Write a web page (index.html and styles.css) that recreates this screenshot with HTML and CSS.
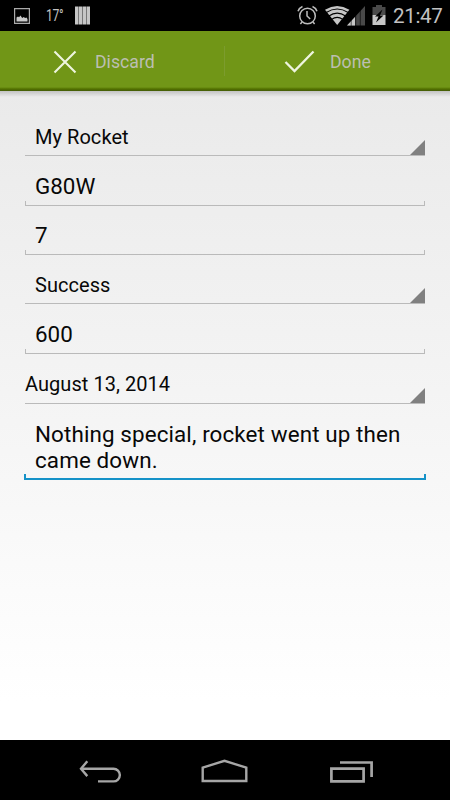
FILE: index.html
```
<!DOCTYPE html>
<html lang="en">
<head>
<meta charset="utf-8">
<title>Flight log</title>
<link rel="stylesheet" href="styles.css">
</head>
<body>
<div class="screen">
  <header class="status">
    <svg class="photo" width="16" height="16" viewBox="0 0 16 16"><path d="M.6.6h14.8v14.8H.6z" fill="none" stroke="#aaa" stroke-width="1.2"/><path d="M2.500 13.500v-4l1.500-1 1 .7 1.500-1.700 1.700 2.500 1.500-1 1.400 1 1.400-.5 1 1.500v2.500z" fill="#c8c8c8"/></svg>
    <span class="temp">17°</span>
    <svg class="bars" width="15" height="19" viewBox="0 0 15 19"><path d="M0 .5h3v18H0zM4 .5h3v18H4zM8 .5h3v18H8zM12 .5h3v18h-3z" fill="#c6c6c6"/><path d="M3 .5h1v18H3zM7 .5h1v18H7zM11 .5h1v18h-1z" fill="#777"/></svg>
    <span class="spacer"></span>
    <svg class="alarm" width="21" height="20" viewBox="0 0 21 20"><g fill="none" stroke="#bcbcbc" stroke-width="1.500"><circle cx="10.500" cy="11" r="7.800"/><path d="M10 6v5l3.200 3"/><path d="M1 6.200Q2 3 5.500 1.500M15.500 1.500Q19 3 20 6.200M5 17l-1.600 2M16 17l1.600 2"/></g></svg>
    <svg class="signal" width="41" height="21" viewBox="0 0 41 21"><path d="M0 4.700Q12.200-2.600 24.400 4.700L12.200 20z" fill="#c6c6c6"/><path d="M1.200 7.500Q12.200.5 23.200 7.500M3.800 11Q12.200 5.200 20.600 11M6.600 14.400Q12.200 10.300 17.800 14.400" fill="none" stroke="#000" stroke-width="1.100"/><path d="M22 20.500L40 1v19.500z" fill="#484848"/><path d="M22 20.500l8-8.600v8.600z" fill="#c6c6c6"/><path d="M26.200 15v6M30.700 10v11M35.300 5v16" stroke="#000" stroke-width=".6"/></svg>
    <svg class="battery" width="14" height="20" viewBox="0 0 14 20"><path d="M4 0h6v2h3.500v8H.5V2H4z" fill="#4a4a4a"/><path d="M.5 10h13v10H.5z" fill="#c6c6c6"/><path d="M10.500 4.500L3 11.500h3.500L4 17.500l7.500-7H8z" fill="#000"/></svg>
    <span class="clock">21:47</span>
  </header>
  <nav class="actions">
    <div class="action discard"><svg width="24" height="24" viewBox="0 0 24 24"><path d="M1.500 1.500l21 21M22.500 1.500l-21 21" fill="none" stroke="#eef5df" stroke-width="2.100"/></svg><span>Discard</span></div>
    <div class="action done"><svg width="31" height="24" viewBox="0 0 31 24"><path d="M1.500 12l9 9L29.500 1.500" fill="none" stroke="#eef5df" stroke-width="2.300"/></svg><span>Done</span></div>
  </nav>
  <main class="form">
    <div class="field spinner h49"><span>My Rocket</span></div>
    <div class="field edit h50"><span>G80W</span></div>
    <div class="field edit h49 short"><span>7</span></div>
    <div class="field spinner h49"><span>Success</span></div>
    <div class="field edit h50"><span>600</span></div>
    <div class="field spinner date h50"><span>August 13, 2014</span></div>
    <div class="field edit notes"><span>Nothing special, rocket went up then<br>came down.</span></div>
  </main>
  <footer class="navbar">
    <svg width="43" height="25" viewBox="0 0 43 25"><g fill="none" stroke="#a6a6a6" stroke-width="2.400"><path d="M2 8.700h32.500a6.350 6.350 0 0 1 0 12.700H19"/><path d="M8.300 1.300L2 8.700l6.300 7.400"/></g></svg>
    <svg width="47" height="25" viewBox="0 0 47 25"><path d="M1.700 8.700L23.500 1.800l21.800 6.900v13.300H1.700z" fill="none" stroke="#a6a6a6" stroke-width="2.400"/></svg>
    <svg width="43" height="22" viewBox="0 0 43 22"><path d="M10 1.500h31.600V16M1.400 7.700h32.200v12.600H1.400z" fill="none" stroke="#a6a6a6" stroke-width="2.700"/></svg>
  </footer>
</div>
</body>
</html>
```

FILE: styles.css
```
body {
  margin: 0;
  font-family: Roboto, sans-serif;
}

.screen {
  width: 450px;
  height: 800px;
  display: flex;
  flex-direction: column;
  overflow: hidden;
  background: #000;
}

svg { display: block; flex: none; }

.status {
  height: 31px;
  flex: none;
  display: flex;
  color: #c2c2c2;
  white-space: nowrap;
}
.photo { margin: 8px 0 0 14px; }
.temp {
  margin: 5px 0 0 16px;
  width: 18px;
  font-size: 16px;
  line-height: 22px;
  letter-spacing: -0.5px;
  transform: scaleX(.76);
  transform-origin: 0 0;
}
.bars { margin: 6px 0 0 11px; }
.spacer { flex: 1; }
.alarm { margin-top: 5px; }
.signal { margin: 5px 0 0 7px; }
.battery { margin: 5px 0 0 6px; }
.clock { width: 64px; padding-left: 7px; box-sizing: border-box; font-size: 20.6px; line-height: 32px; letter-spacing: -0.35px; }

.actions {
  height: 60px;
  flex: none;
  display: flex;
  background: linear-gradient(#719617 56px, #527000 58px, #445b08 60px);
  color: #bcbfb2;
  font-size: 17.700px;
}
.action {
  width: 225px;
  box-sizing: border-box;
  display: flex;
  align-items: center;
  padding-top: 1px;
}
.discard {
  padding-left: 53px;
  gap: 18px;
  background: linear-gradient(#7c9c2e, #7c9c2e) right 15px / 1px 30px no-repeat;
}
.done { padding-left: 59px; gap: 15px; }
.action span { line-height: 24px; }

.form {
  height: 649px;
  flex: none;
  box-sizing: border-box;
  padding: 16px 25px 0;
  background:
    linear-gradient(rgba(0, 0, 0, .17), rgba(0, 0, 0, 0) 6px),
    linear-gradient(#eaeaea, #f0f0f0 28%, #f7f7f7 60%, #fff 94%);
  color: #080808;
}
.field {
  display: flex;
  box-sizing: border-box;
  position: relative;
  padding-left: 10px;
  border-bottom: 1px solid #bababa;
  white-space: nowrap;
}
.h49 { height: 49px; }
.h50 { height: 50px; }
.spinner { font-size: 20px; line-height: 24px; padding-top: 18px; letter-spacing: 0.05px; }
.spinner::after {
  content: "";
  position: absolute;
  right: 0;
  bottom: 0;
  width: 15px;
  height: 15px;
  background: #808080;
  clip-path: polygon(100% 0, 100% 100%, 0 100%);
}
.date { padding-left: 0; }
.edit { font-size: 22.400px; line-height: 26px; padding-top: 17px; }
.short { padding-top: 16px; }
.edit::before,
.edit::after {
  content: "";
  position: absolute;
  bottom: 0;
  width: 1px;
  height: 4px;
  background: #bababa;
}
.edit::before { left: 0; }
.edit::after { right: 0; }
.notes {
  height: 76px;
  margin: 0 -1px;
  padding: 17px 0 0 11px;
  border-bottom: 2px solid #1592c8;
  letter-spacing: 0.12px;
}
.notes::before,
.notes::after { width: 2px; background: #1592c8; }

.navbar {
  height: 60px;
  flex: none;
  box-sizing: border-box;
  display: flex;
  align-items: flex-start;
  padding: 19px 77px 0 79px;
  justify-content: space-between;
}
.navbar svg:nth-child(1) { margin-top: 1px; }
.navbar svg:nth-child(2) { margin: 0 1px 0 -2px; }
.navbar svg:nth-child(3) { margin-top: 2px; }
```
